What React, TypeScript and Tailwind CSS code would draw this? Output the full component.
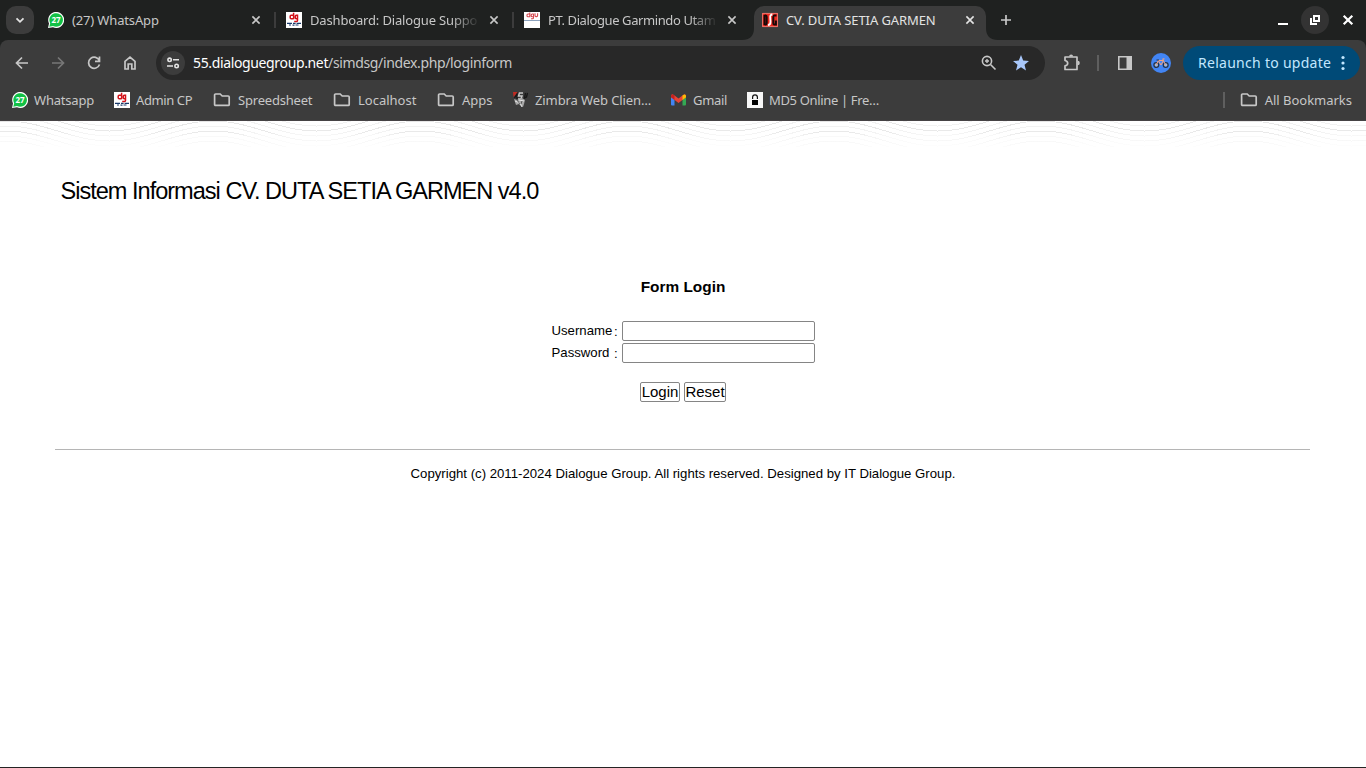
import React from "react";

const Folder = () => (
  <svg width="18" height="16" viewBox="0 0 18 16" fill="none" stroke="#c7c7c7" strokeWidth="1.7" className="shrink-0">
    <path d="M2.8 2h4.4l2 2h6q1 0 1 1v7.4q0 1-1 1H2.6q-1 0-1-1V3q0-1 1-1z" />
  </svg>
);

const Close = ({ color = "#c7c7c7" }: { color?: string }) => (
  <svg width="16" height="16" viewBox="0 0 16 16" stroke={color} strokeWidth="1.6" className="shrink-0">
    <path d="M4.4 4.4l7.2 7.2M11.6 4.4l-7.2 7.2" />
  </svg>
);

const WhatsApp = () => (
  <span className="relative flex size-4 shrink-0 items-center justify-center">
    <svg width="16" height="16" viewBox="0 0 16 16" className="absolute inset-0">
      <path d="M0 16l1-4.5A8 8 0 1 1 5 15.3z" fill="#fff" />
      <path d="M1.3 14.7l.9-3.4A6.8 6.8 0 1 1 5 14z" fill="#12c146" />
    </svg>
    <span className="relative font-['Open_Sans',sans-serif] text-[8px] leading-none font-bold text-white">27</span>
  </span>
);

const Dg = () => (
  <svg width="16" height="16" viewBox="0 0 16 16" fill="none" className="shrink-0">
    <path fill="#fff" d="M0 0h16v16H0z" />
    <path stroke="#d2131a" strokeWidth="1.5" d="M7.6.8v6.4M7.4 3.2H5.2q-1 0-1 1v1.6q0 1 1 1h2.2M11.5 2.6v6q0 1-1 1H8.2M11.5 3.2h-1.2q-1 0-1 1v1.6q0 1 1 1h1.2" />
    <path stroke="#193a6b" strokeWidth="1.2" d="M1 11.4h5M7 11.4h2.6M10.6 11.4H15M3 13h2M6.5 13.2h2M9.5 13h3" />
  </svg>
);

const Dgu = () => (
  <svg width="16" height="16" viewBox="0 0 16 16" fill="none" className="shrink-0">
    <path fill="#fff" d="M0 0h16v16H0z" />
    <path stroke="#d64a50" strokeWidth="1.1" d="M5.8.5v4.3H4q-1 0-1-1V3q0-1 1-1h1.8M9.5 1.8v4q0 1-1 1H7M9.5 2H8.2q-1 0-1 1v.8q0 1 1 1h1.3M11 1.2v2.4q0 1 1 1h.6q1 0 1-1V1.2" />
    <path stroke="#8ca2bd" d="M0 8.5h16" />
  </svg>
);

const Dsg = () => (
  <svg width="16" height="16" viewBox="0 0 16 16" fill="none" className="shrink-0">
    <path fill="#ef2a20" d="M0 1h16v14H0z" />
    <path stroke="#e98a80" strokeWidth=".8" d="M.4 1.4h15.2v13.2H.4z" />
    <path stroke="#190808" strokeWidth="2" d="M2.5 3v10M2.5 3.5h1.2q1 0 1 1.5v6q0 1.5-1 1.5H2.5M14.5 3.5h-2.2q-1 0-1 1.5v6q0 1.5 1 1.5h1.6V8.5" />
    <path stroke="#fff" strokeWidth="1.8" d="M10.4 2.5Q8 2.7 8.2 5l.3 5q0 3-2.6 3" />
  </svg>
);

const Zimbra = () => (
  <svg width="17" height="16" viewBox="0 0 17 16" fill="none" className="shrink-0">
    <path fill="#c02b22" d="M1 0h5L1.5 5z" />
    <path stroke="#171717" strokeWidth="1.3" d="M2.5 6l2.5-4v5M13.5 1l-1 5 2-1 1-4" />
    <path stroke="#c8c8c8" strokeWidth="1.5" d="M11 1H7.5L6.5 4H10l-1 3H6" />
    <path fill="#a5a5a5" d="M2 7l3 1 5-2 3 2-1 4-1 3-2-1-2-2-3 1z" />
    <path stroke="#e5e5e5" d="M3 9l5 2 2 4M7 8l5 1" />
    <path stroke="#444" strokeWidth=".8" d="M5 8l3 4M10 9l-1 3" />
  </svg>
);

const Gmail = () => (
  <svg width="15" height="12" viewBox="0 0 15 12" className="shrink-0">
    <path fill="#4285f4" d="M0 2v8.5Q0 11.5 1 11.5h2.5V4z" />
    <path fill="#34a853" d="M11.5 4v7.5H14q1 0 1-1V2z" />
    <path fill="#ea4335" d="M0 2Q.3-.5 2.5.7l5 3.8 5-3.8Q14.7-.5 15 2v1.3L7.5 9 0 3.3z" />
    <path fill="#fbbc04" d="M11.5 1.4Q14.7-.7 15 2v1.3L11.5 6z" />
    <path fill="#c5221f" d="M0 3.3V2Q.3-.7 3.5 1.4V6z" />
  </svg>
);

const Lock = () => (
  <svg width="16" height="16" viewBox="0 0 16 16" fill="none" className="shrink-0">
    <path fill="#f7f7f7" d="M0 0h16v16H0z" />
    <path stroke="#111" strokeWidth="1.2" d="M5.6 7V5.2a2.4 2.4 0 0 1 4.8 0V7" />
    <path fill="#000" d="M5 8h6v5H5z" />
  </svg>
);

const Nav = ({ d, color = "#c7c7c7" }: { d: string; color?: string }) => (
  <svg width="16" height="16" viewBox="0 0 16 16" fill="none" stroke={color} strokeWidth="1.7" className="shrink-0">
    <path d={d} />
  </svg>
);

function Tab({ icon, title, track, faded }: { icon: React.ReactNode; title: string; track: string; faded?: boolean }) {
  return (
    <div className="flex w-[238px] shrink-0 items-center pr-2.5 pl-3">
      {icon}
      <span className={`ml-2 w-[170px] whitespace-nowrap ${track} ${faded ? "[mask-image:linear-gradient(to_right,black_142px,transparent_170px)]" : ""}`}>
        {title}
      </span>
      <span className="ml-auto flex"><Close /></span>
    </div>
  );
}

const Divider = () => <div className="-mr-0.5 h-4 w-0.5 shrink-0 bg-[#3c3c3c]" />;

function TabStrip() {
  return (
    <div className="flex h-10 bg-[#1f2120] text-[#c7c7c7]">
      <div className="flex w-9 shrink-0 items-center pl-1.5">
        <div className="flex h-7 w-7 shrink-0 items-center justify-center rounded-[10px] bg-[#3c3c3c]">
          <svg width="12" height="12" viewBox="0 0 12 12" fill="none" stroke="#e3e3e3" strokeWidth="1.8"><path d="M2.5 4.3L6 7.8l3.5-3.5" /></svg>
        </div>
      </div>
      <div className="flex items-center">
        <Tab icon={<WhatsApp />} title="(27) WhatsApp" track="tracking-[-0.15px]" />
        <Divider />
        <Tab icon={<Dg />} title="Dashboard: Dialogue Suppo" track="tracking-[-0.16px]" faded />
        <Divider />
        <Tab icon={<Dgu />} title="PT. Dialogue Garmindo Utam" track="tracking-[-0.4px]" faded />
      </div>
      <svg width="12" height="40" viewBox="0 0 12 40" className="-ml-2 shrink-0"><path fill="#3c3c3c" d="M0 40Q12 40 12 28v12z" /></svg>
      <div className="mt-1.5 flex w-[232px] shrink-0 items-center rounded-t-[10px] bg-[#3c3c3c] pr-2 pb-1.5 pl-2 text-[#e3e3e3]">
        <Dsg />
        <span className="ml-2 whitespace-nowrap tracking-[-0.1px]">CV. DUTA SETIA GARMEN</span>
        <span className="ml-auto flex"><Close color="#e3e3e3" /></span>
      </div>
      <svg width="12" height="40" viewBox="0 0 12 40" className="shrink-0"><path fill="#3c3c3c" d="M12 40Q0 40 0 28v12z" /></svg>
      <svg width="16" height="16" viewBox="0 0 16 16" stroke="#c7c7c7" strokeWidth="1.7" className="mt-3 shrink-0"><path d="M8 3v10M3 8h10" /></svg>
      <div className="ml-auto flex shrink-0 items-center pr-2.5">
        <svg width="12" height="12" viewBox="0 0 12 12" className="mt-1.5"><path fill="#fff" d="M1 6h10v2H1z" /></svg>
        <div className="ml-3 flex size-7 items-center justify-center rounded-full bg-[#333]">
          <svg width="12" height="12" viewBox="0 0 12 12" fill="none" stroke="#fff" strokeWidth="2"><path d="M5 2h5v5H5zM2 4v6h6" /></svg>
        </div>
        <svg width="16" height="16" viewBox="0 0 16 16" stroke="#fff" strokeWidth="2.2" className="ml-[11px]"><path d="M3.7 3.7l8.6 8.6M12.3 3.7l-8.6 8.6" /></svg>
      </div>
    </div>
  );
}

function Toolbar() {
  return (
    <div className="bg-[#1f2120]">
      <div className="flex h-[46px] items-center rounded-t-lg bg-[#3c3c3c] pl-3.5">
        <div className="flex w-[142px] shrink-0 gap-5">
          <Nav d="M14 8H3M8 2.5L2.5 8 8 13.5" />
          <Nav d="M2 8h11M8 2.5L13.5 8 8 13.5" color="#777" />
          <Nav d="M13.4 5.7A5.6 5.6 0 1 0 13.5 9.5M13.5 1.5v4.8H9" />
          <Nav d="M3 14V6.3l5-4.2 5 4.2V14H9.8V9H6.2v5z" />
        </div>
        <div className="flex h-[34px] w-[889px] shrink-0 items-center rounded-full bg-[#282828] pl-[5px]">
          <div className="flex size-6 shrink-0 items-center justify-center rounded-full bg-[#3c3c3c]">
            <svg width="14" height="14" viewBox="0 0 14 14" fill="none" stroke="#e3e3e3" strokeWidth="1.6"><circle cx="3.6" cy="3.8" r="1.7" /><path d="M7 3.8h6M1 10h6" /><circle cx="10.6" cy="10" r="1.7" /></svg>
          </div>
          <span className="ml-2 text-[14px] tracking-[-0.36px] whitespace-nowrap text-[#c7c7c7]"><span className="text-white">55.dialoguegroup.net</span>/simdsg/index.php/loginform</span>
          <svg width="18" height="18" viewBox="0 0 18 18" fill="none" stroke="#c7c7c7" strokeWidth="1.6" className="ml-auto shrink-0"><circle cx="7" cy="7" r="4.6" /><path d="M10.5 10.5l5 5" /><path d="M7 5v4M5 7h4" strokeWidth="1.4" /></svg>
          <svg width="18" height="18" viewBox="0 0 18 18" className="mr-[15px] ml-3.5 shrink-0"><path fill="#a8c7fa" d="M9 1l2.2 5.6 5.8.4-4.5 3.7 1.5 5.8L9 13.3l-5 3.2 1.5-5.8L1 7l5.8-.4z" /></svg>
        </div>
        <svg width="20" height="20" viewBox="0 0 20 20" fill="none" stroke="#c7c7c7" strokeWidth="1.7" className="ml-[17px] shrink-0"><path d="M3 4h12v12.5H3v-3.6q2.7-.4 2.7-2.6T3 7.5z" strokeLinejoin="round" /><path d="M7.8 3.4a1.3 1.3 0 0 1 2.6 0M15.6 8.5a1.5 1.5 0 0 1 0 3" fill="#c7c7c7" strokeWidth="1.4" /></svg>
        <div className="ml-[15px] h-4 w-0.5 shrink-0 bg-[#5f5f5f]" />
        <svg width="16" height="16" viewBox="0 0 16 16" className="ml-[18px] shrink-0"><path fill="none" stroke="#c7c7c7" strokeWidth="1.6" d="M1.8 1.8h12.4v12.4H1.8z" /><path fill="#c7c7c7" d="M9.5 1.5H15v13H9.5z" /></svg>
        <svg width="20" height="20" viewBox="0 0 20 20" fill="none" className="ml-[18px] shrink-0"><circle cx="10" cy="10" r="10" fill="#4285f4" /><circle cx="5.3" cy="12" r="2.4" stroke="#25324a" strokeWidth="1.3" fill="#9cb7df" /><circle cx="14.7" cy="12" r="2.4" stroke="#25324a" strokeWidth="1.3" fill="#9cb7df" /><path stroke="#f5a27d" d="M5.3 12l2-4.5h5l2.4 4.5M7.5 8l2.5 4 2.5-4.5-.8-1.6h1.8" /><path stroke="#26334a" d="M5.5 7H8" /></svg>
        <div className="ml-3 flex h-[34px] w-[177px] shrink-0 items-center rounded-full bg-[#004a77] pl-[15px] text-[14px] text-[#c2e7ff]">
          <span className="tracking-[0.28px] whitespace-nowrap">Relaunch to update</span>
          <svg width="4" height="16" viewBox="0 0 4 16" fill="#c2e7ff" className="mr-[15px] ml-auto shrink-0"><circle cx="2" cy="2.5" r="1.6" /><circle cx="2" cy="8" r="1.6" /><circle cx="2" cy="13.5" r="1.6" /></svg>
        </div>
      </div>
    </div>
  );
}

const bookmarks = [
  { label: "Whatsapp", icon: <WhatsApp />, box: "w-[102px] gap-1.5", track: "tracking-[-0.2px]" },
  { label: "Admin CP", icon: <Dg />, box: "w-[99px] gap-1.5", track: "tracking-[-0.4px]" },
  { label: "Spreedsheet", icon: <Folder />, box: "w-[120px] gap-[7px]", track: "tracking-[-0.2px]" },
  { label: "Localhost", icon: <Folder />, box: "w-[104px] gap-[7px]", track: "tracking-normal" },
  { label: "Apps", icon: <Folder />, box: "w-[75px] gap-[7px]", track: "tracking-normal" },
  { label: "Zimbra Web Clien…", icon: <Zimbra />, box: "w-[159px] gap-[6px]", track: "tracking-[-0.1px]" },
  { label: "Gmail", icon: <Gmail />, box: "w-[76px] gap-[7px]", track: "tracking-[-0.3px]" },
  { label: "MD5 Online | Fre…", icon: <Lock />, box: "w-[160px] gap-[6px]", track: "tracking-[-0.34px]" },
];

function Bookmarks() {
  return (
    <div className="flex h-[35px] items-center border-b border-[#464345] bg-[#3c3c3c] pb-[7px] pl-3 text-[#c7c7c7]">
      {bookmarks.map((b) => (
        <div key={b.label} className={`flex shrink-0 items-center ${b.box}`}>
          {b.icon}
          <span className={`whitespace-nowrap ${b.track}`}>{b.label}</span>
        </div>
      ))}
      <div className="ml-auto flex items-center pr-3.5">
        <div className="mr-[15px] h-4 w-0.5 bg-[#5f5f5f]" />
        <Folder />
        <span className="ml-[7px] tracking-[-0.01px] whitespace-nowrap">All Bookmarks</span>
      </div>
    </div>
  );
}

const arcs = [-20, -15, -10, -5, 0, 5, 10, 15, 20];

function Waves() {
  return (
    <svg width="1366" height="26" viewBox="0 0 1366 26" fill="none" className="block shrink-0">
      <defs>
        <pattern id="wave" width="207" height="26" patternUnits="userSpaceOnUse" x="6">
          {arcs.map((y, i) => (
            <path
              key={y}
              shapeRendering="crispEdges"
              d={`M0 ${y}C38 ${y} 65 ${y + 20} 103.5 ${y + 20}S169 ${y} 207 ${y}`}
              stroke={i % 2 ? "#f1f1f1" : "#e6e6e6"}
            />
          ))}
        </pattern>
        <linearGradient id="fade" x1="0" y1="0" x2="0" y2="1">
          <stop offset="0" stopColor="#fff" stopOpacity="0" />
          <stop offset=".45" stopColor="#fff" stopOpacity=".15" />
          <stop offset=".6" stopColor="#fff" stopOpacity=".6" />
          <stop offset="1" stopColor="#fff" stopOpacity=".9" />
        </linearGradient>
      </defs>
      <path fill="url(#wave)" d="M0 0h1366v26H0z" />
      <path fill="url(#fade)" d="M0 0h1366v26H0z" />
    </svg>
  );
}

function Field({ label, type }: { label: string; type: string }) {
  return (
    <label className="flex h-5 items-center text-[13.2px]">
      <span className="w-[62.5px]">{label}</span>
      <span className="w-[7.5px] pt-0.5">:</span>
      <input type={type} className="h-5 w-[193px] rounded-[2px] border border-[#858585] bg-white outline-none" />
    </label>
  );
}

export default function App() {
  return (
    <div className="flex h-screen w-[1366px] flex-col overflow-hidden border-b border-[#242424] bg-white">
      <div className="font-['Noto_Sans',sans-serif] text-[13px] leading-5">
        <TabStrip />
        <Toolbar />
        <Bookmarks />
      </div>
      <Waves />
      <main className="flex flex-col items-center px-[55px] font-['Liberation_Sans',Arial,sans-serif] text-black">
        <h1 className="mt-7 self-start pl-[5.5px] text-[23.55px] leading-8 tracking-[-1px] whitespace-nowrap">Sistem Informasi CV. DUTA SETIA GARMEN v4.0</h1>
        <h2 className="mt-[70px] text-[15.4px] leading-5 font-bold">Form Login</h2>
        <form className="mt-6 flex flex-col gap-0.5" onSubmit={(e) => e.preventDefault()}>
          <Field label="Username" type="text" />
          <Field label="Password" type="password" />
          <div className="mt-[17px] flex justify-center gap-1 text-[15px] leading-[18px]">
            <button type="button" className="h-5 w-10 rounded-[2px] border border-[#858585]">Login</button>
            <button type="reset" className="h-5 w-[42px] rounded-[2px] border border-[#858585]">Reset</button>
          </div>
        </form>
        <hr className="mt-[47px] w-[1255px] self-start border-t border-[#b5b5b5]" />
        <p className="mt-[14px] text-[13.2px] leading-5">Copyright (c) 2011-2024 Dialogue Group. All rights reserved. Designed by IT Dialogue Group.</p>
      </main>
    </div>
  );
}
